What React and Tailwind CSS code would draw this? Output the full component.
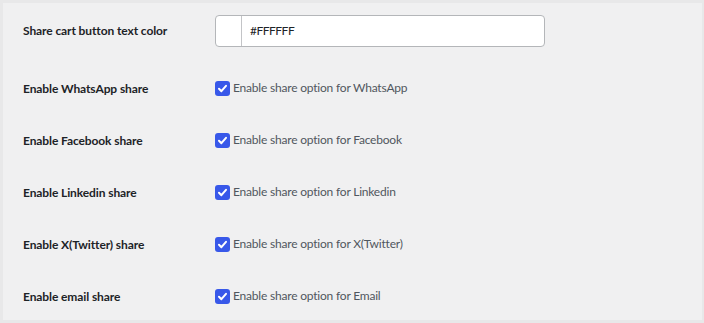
import { useState } from "react";

const shares = [
    { label: "Enable WhatsApp share", text: "Enable share option for WhatsApp" },
    { label: "Enable Facebook share", text: "Enable share option for Facebook" },
    { label: "Enable Linkedin share", text: "Enable share option for Linkedin" },
    { label: "Enable X(Twitter) share", text: "Enable share option for X(Twitter)" },
    { label: "Enable email share", text: "Enable share option for Email" },
];

function Check({ checked, onClick }) {
    return (
        <span
            onClick={onClick}
            className={`flex h-[15px] w-[15px] shrink-0 cursor-pointer items-center justify-center rounded-[3px] ${
                checked ? "bg-[#3858e9]" : "border border-[#8c8f94] bg-white"
            }`}
        >
            {checked && (
                <svg width="11" height="11" viewBox="0 0 11 11">
                    <path d="M2 5.8 L4.4 8.2 L9 2.8" fill="none" stroke="white" strokeWidth="2" strokeLinecap="round" strokeLinejoin="round" />
                </svg>
            )}
        </span>
    );
}

export default function App() {
    const [enabled, setEnabled] = useState(shares.map(() => true));

    const toggle = (i) => {
        setEnabled((prev) => prev.map((v, j) => (j === i ? !v : v)));
    };

    return (
        <div className="h-[323px] w-[704px] overflow-hidden bg-[#e8e8e9] pt-[3px] pl-[3px] pr-[2px] pb-[3px] font-['Lato',sans-serif]">
            <div className="h-full bg-[#f0f0f1] pt-3">
                <div className="flex h-8 items-center">
                    <div className="w-[212px] pl-5 text-[12px] font-bold tracking-[-0.1px] text-[#1d2327]">
                        Share cart button text color
                    </div>
                    <div className="flex h-8 w-[330px] overflow-hidden rounded-[4px] border border-[#b4b6b9] bg-white">
                        <div className="w-[26px] border-r border-[#c3c4c7]" />
                        <div className="flex items-center pl-2 text-[12px] tracking-[-0.5px] text-[#1d2327]">#FFFFFF</div>
                    </div>
                </div>
                <div className="mt-[15px]">
                    {shares.map((s, i) => (
                        <div key={s.label} className="flex h-[52px] items-center">
                            <div className="w-[212px] pl-5 pt-[2px] text-[12px] font-bold tracking-[-0.1px] text-[#1d2327]">
                                {s.label}
                            </div>
                            <label className="flex items-center gap-[3px] text-[12px] tracking-[-0.2px] text-[#50575e]">
                                <Check checked={enabled[i]} onClick={() => toggle(i)} />
                                {s.text}
                            </label>
                        </div>
                    ))}
                </div>
            </div>
        </div>
    );
}
